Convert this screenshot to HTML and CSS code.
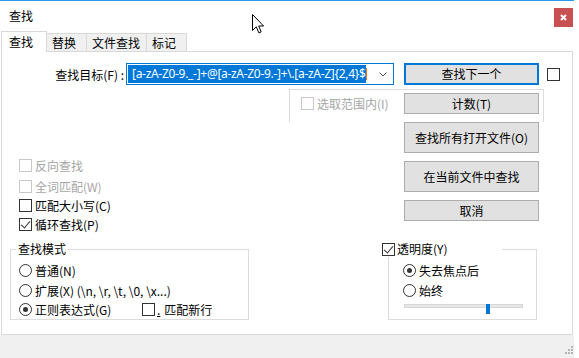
FILE: index.html
```html
<!DOCTYPE html>
<html lang="zh-CN">
<head>
  <meta charset="UTF-8">
  <title>查找</title>
  <link rel="stylesheet" href="styles.css">
</head>
<body>
  <div class="window">
    <!-- Title bar -->
    <div class="titlebar">
      <span class="title">查找</span>
      <span class="close">
        <svg width="7" height="7" viewBox="0 0 7 7"><path d="M1 1 L6 6 M6 1 L1 6" stroke="#fff" stroke-width="2"/></svg>
      </span>
    </div>

    <!-- Tabs -->
    <div class="tabs">
      <div class="tab active">查找</div>
      <div class="tab w-41">替换</div>
      <div class="tab w-61">文件查找</div>
      <div class="tab w-41">标记</div>
    </div>

    <div class="panel">
      <!-- Search target -->
      <div class="find-row">
        <label class="find-label">查找目标(F) :</label>
        <div class="combo">
          <div class="combo-text"><span class="sel">[a-zA-Z0-9._-]+@[a-zA-Z0-9.-]+\.[a-zA-Z]{2,4}$</span><span class="caret"></span></div>
          <span class="combo-arrow">
            <svg width="8" height="5" viewBox="0 0 8 5"><path d="M0.5 0.5 L4 4 L7.5 0.5" fill="none" stroke="#555" stroke-width="1"/></svg>
          </span>
        </div>
        <button class="btn default">查找下一个</button>
        <span class="check side-check"></span>
      </div>

      <!-- In selection -->
      <div class="range-box">
        <div class="opt disabled"><span class="check"></span>选取范围内(I)</div>
        <button class="btn">计数(T)</button>
      </div>

      <div class="mid-row">
        <div class="opts">
          <div class="opt disabled h-21"><span class="check"></span>反向查找</div>
          <div class="opt disabled h-20"><span class="check"></span>全词匹配(W)</div>
          <div class="opt h-18"><span class="check"></span>匹配大小写(C)</div>
          <div class="opt h-20"><span class="check checked"></span>循环查找(P)</div>
        </div>
        <div class="btn-col">
          <button class="btn tall">查找所有打开文件(O)</button>
          <button class="btn tall">在当前文件中查找</button>
          <button class="btn">取消</button>
        </div>
      </div>

      <div class="group-row">
        <!-- Search mode -->
        <div class="group mode">
          <span class="group-title">查找模式</span>
          <div class="opt h-20"><span class="radio"></span>普通(N)</div>
          <div class="opt h-20"><span class="radio"></span>扩展(X) (\n, \r, \t, \0, \x...)</div>
          <div class="opt h-19">
            <span class="radio-item"><span class="radio on"></span>正则表达式(G)</span>
            <span class="newline"><span class="check"></span><span class="dot">.</span><span class="nl-text">匹配新行</span></span>
          </div>
        </div>

        <!-- Transparency -->
        <div class="group trans">
          <span class="group-title trans-title"><span class="check checked"></span>透明度(Y)</span>
          <div class="opt h-20"><span class="radio on"></span>失去焦点后</div>
          <div class="opt h-20"><span class="radio"></span>始终</div>
          <div class="slider">
            <div class="track"></div>
            <span class="thumb"></span>
          </div>
        </div>
      </div>
    </div>

    <div class="footer">
      <svg class="grip" width="9" height="9" viewBox="0 0 9 9" fill="#b4b4b4">
        <rect x="7" y="1" width="2" height="2"/>
        <rect x="4" y="4" width="2" height="2"/><rect x="7" y="4" width="2" height="2"/>
        <rect x="1" y="7" width="2" height="2"/><rect x="4" y="7" width="2" height="2"/><rect x="7" y="7" width="2" height="2"/>
      </svg>
    </div>
  </div>

  <!-- mouse pointer -->
  <svg class="pointer" width="13" height="21" viewBox="0 0 13 21">
    <path d="M0.5 0.5 L0.5 16.5 L4.3 12.8 L6.9 18.9 L9.2 17.9 L6.7 12 L11.6 12 Z" fill="#fff" stroke="#000" stroke-width="1" stroke-linejoin="miter"/>
  </svg>
</body>
</html>
```

FILE: styles.css
```css
/* General */
* {
  box-sizing: border-box;
}
body {
  margin: 0;
  background: #ffffff;
  font-family: "Noto Sans CJK SC", sans-serif;
  font-size: 12px;
  color: #000000;
}
.window {
  width: 574px;
  height: 358px;
  border-top: 1px solid #2b9af3;
  display: flex;
  flex-direction: column;
}

/* Title bar */
.titlebar {
  height: 30px;
  display: flex;
  justify-content: space-between;
  align-items: flex-start;
  padding-left: 9px;
}
.title {
  margin-top: 7px;
  line-height: 16px;
}
.close {
  width: 19px;
  height: 19px;
  margin-top: 7px;
  margin-right: 1px;
  background: #c75050;
  display: flex;
  align-items: center;
  justify-content: center;
}

/* Tabs */
.tabs {
  display: flex;
  align-items: flex-end;
  height: 20px;
  padding-left: 1px;
}
.tab {
  height: 18px;
  margin-left: -1px;
  padding-left: 5px;
  border: 1px solid #d9d9d9;
  border-bottom: none;
  background: #f0f0f0;
  line-height: 17px;
}
.tab.active {
  width: 46px;
  height: 21px;
  margin-left: 0;
  margin-bottom: -1px;
  padding-left: 7px;
  background: #ffffff;
  line-height: 19px;
  position: relative;
  z-index: 1;
}
.w-41 { width: 41px; }
.w-61 { width: 61px; }

/* Panel */
.panel {
  margin-left: 1px;
  width: 572px;
  height: 284px;
  border: 1px solid #d9d9d9;
  background: #ffffff;
}
.footer {
  flex: 1;
  background: #f0f0f0;
  display: flex;
  justify-content: flex-end;
  align-items: flex-end;
  padding: 0 1px 4px 0;
}

/* Controls */
.btn {
  width: 135px;
  height: 21px;
  padding: 0;
  border: 1px solid #adadad;
  background: #e1e1e1;
  font-family: inherit;
  font-size: 12px;
  color: #000;
  line-height: 18px;
}
.btn.default {
  height: 22px;
  border: 2px solid #0078d7;
}
.btn.tall {
  height: 31px;
}
.check {
  display: inline-block;
  flex: none;
  width: 13px;
  height: 13px;
  border: 1px solid #333333;
  background: #fff;
  margin-right: 3px;
  position: relative;
}
.check.checked::after {
  content: "";
  position: absolute;
  left: 3px;
  top: 0px;
  width: 4px;
  height: 8px;
  border: solid #333;
  border-width: 0 1px 1px 0;
  transform: rotate(40deg);
}
.radio {
  display: inline-block;
  flex: none;
  width: 13px;
  height: 13px;
  border: 1px solid #333333;
  border-radius: 50%;
  margin-right: 3px;
  position: relative;
}
.radio.on::after {
  content: "";
  position: absolute;
  left: 3px;
  top: 3px;
  width: 5px;
  height: 5px;
  border-radius: 50%;
  background: #333;
}
.opt {
  display: flex;
  align-items: center;
  white-space: nowrap;
}
.opt.disabled {
  color: #a6a6a6;
}
.opt.disabled .check {
  border-color: #c8c8c8;
}
.h-18 { height: 18px; }
.h-19 { height: 19px; }
.h-20 { height: 20px; }
.h-21 { height: 21px; }

/* Find row */
.find-row {
  display: flex;
  align-items: center;
  height: 22px;
  margin-top: 11px;
}
.find-label {
  width: 122px;
  text-align: right;
}
.combo {
  display: flex;
  align-items: center;
  width: 268px;
  height: 22px;
  margin-left: 2px;
  border: 1px solid #0078d7;
}
.combo-text {
  flex: 1;
  display: flex;
  align-items: center;
  overflow: hidden;
  white-space: nowrap;
  padding-left: 1px;
}
.sel {
  background: #0078d7;
  color: #fff;
  font-family: "Noto Sans", sans-serif;
  font-size: 12px;
  letter-spacing: -0.3px;
  line-height: 18px;
  padding-left: 4px;
}
.caret {
  width: 1px;
  height: 12px;
  background: #e8791f;
}
.combo-arrow {
  width: 20px;
  display: flex;
  justify-content: center;
}
.find-row .btn {
  margin-left: 10px;
}
.side-check {
  margin-left: 8px;
}

/* In selection box */
.range-box {
  display: flex;
  align-items: flex-start;
  width: 255px;
  height: 33px;
  margin: 4px 0 0 287px;
  padding: 3px 4px 0 11px;
  border: 1px solid #dcdcdc;
  border-bottom: none;
}
.range-box .opt {
  height: 21px;
}
.range-box .btn {
  margin-left: auto;
}

/* Middle row */
.mid-row {
  display: flex;
}
.opts {
  width: 385px;
  margin-left: 17px;
  padding-top: 33px;
}
.btn-col {
  display: flex;
  flex-direction: column;
  gap: 8px;
}

/* Group boxes */
.group-row {
  display: flex;
  margin-top: 15px;
}
.group {
  position: relative;
  height: 71px;
  border: 1px solid #dcdcdc;
  padding-top: 10px;
}
.group-title {
  position: absolute;
  top: -9px;
  left: 5px;
  padding: 0 2px;
  background: #fff;
  line-height: 16px;
}
.mode {
  width: 239px;
  margin-left: 8px;
  padding-left: 8px;
}
.radio-item {
  display: flex;
  align-items: center;
  width: 123px;
}
.newline {
  display: flex;
  align-items: center;
}
.newline .check {
  margin-right: 2px;
}
.dot {
  text-decoration: underline;
}
.nl-text {
  margin-left: 4px;
}
.trans {
  width: 149px;
  margin-left: 139px;
  padding-left: 14px;
}
.trans-title {
  left: -7px;
  width: 120px;
  padding: 0;
  display: flex;
  align-items: center;
}
.trans-title .check {
  margin-right: 2px;
}
.slider {
  position: relative;
  width: 119px;
  height: 10px;
  margin: 1px 0 0 1px;
}
.track {
  margin-top: 4px;
  height: 4px;
  border: 1px solid #d6d6d6;
  background: #e7e7e7;
}
.thumb {
  position: absolute;
  left: 82px;
  top: 0;
  width: 4px;
  height: 10px;
  background: #0078d7;
}

/* Mouse pointer over the title bar */
.pointer {
  position: absolute;
  left: 252px;
  top: 14px;
}
```
